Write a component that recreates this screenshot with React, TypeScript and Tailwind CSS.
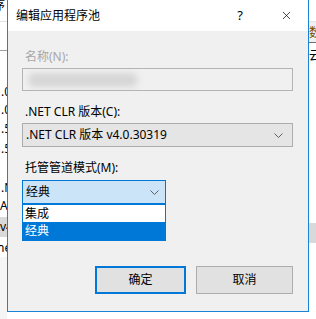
import { X } from "lucide-react";

const font = { fontFamily: '"Noto Sans", "Noto Sans CJK SC", sans-serif' };

function Chevron() {
  return (
    <svg width="9" height="5" viewBox="0 0 9 5" className="shrink-0">
      <path d="M0.5 0.5 L4.5 4.5 L8.5 0.5" fill="none" stroke="#606060" strokeWidth="1" />
    </svg>
  );
}

function BackLeft() {
  return (
    <div className="w-[7px] h-full overflow-hidden flex flex-col text-[12px] leading-[16px] text-black">
      <div className="h-[21px] bg-white relative">
        <span className="absolute left-[-7px] top-[-2px]">序</span>
      </div>
      <div className="h-px bg-[#e3e3e3]" />
      <div className="h-[28px] bg-white" />
      <div className="h-px bg-[#a0a0a0]" />
      <div className="flex flex-col bg-white pt-[33px] whitespace-nowrap">
        <div className="h-[18px] pl-[1px]">.0</div>
        <div className="h-[19px] pl-[1px]">.0</div>
        <div className="h-[20px] pl-[1px]">.5</div>
        <div className="h-[39px] pl-[1px]">.5</div>
        <div className="h-[18px] pl-[1px]">.N</div>
        <div className="h-[19px]">Ap</div>
        <div className="h-[20px] bg-[#d9d9d9] leading-[20px]">v4</div>
        <div className="h-[20px] ml-[-3px] leading-[22px]">ne</div>
      </div>
      <div className="flex-1 bg-[#f5f5f5]" />
    </div>
  );
}

function BackRight() {
  return (
    <div className="w-[7px] h-full overflow-hidden flex flex-col text-[12px] leading-[16px] text-black">
      <div className="h-[21px] bg-white" />
      <div className="h-px bg-[#e3e3e3]" />
      <div className="h-[20px] bg-[#f0f0f0] whitespace-nowrap pt-[3px] text-[#7a4a00]">数</div>
      <div className="h-px bg-[#707070]" />
      <div className="h-[180px] bg-white whitespace-nowrap pt-[5px]">云</div>
      <div className="h-[20px] bg-[#d9d9d9]" />
      <div className="flex-1 bg-white" />
    </div>
  );
}

export default function App() {
  return (
    <div className="relative w-[316px] h-[319px] overflow-hidden bg-white" style={font}>
      <div className="flex justify-between h-full">
        <BackLeft />
        <div className="flex-1 bg-white" />
        <BackRight />
      </div>

      {/* dialog */}
      <div className="absolute left-[7px] top-0 w-[302px] h-[312px] border-x border-b border-[#1883d7] flex flex-col">
        <div className="h-[31px] bg-white flex items-center pl-[8px] text-[12px] text-black">
          <span className="flex-1">编辑应用程序池</span>
          <span className="w-[12px] text-[13px] mr-[34px] text-center">?</span>
          <X className="w-[13px] h-[13px] mr-[15px]" strokeWidth={1.3} color="#000" />
        </div>

        <div className="flex-1 bg-[#f0f0f0] pl-[14px] pr-[15px] pt-[18px] text-[12px] leading-[16px] text-black">
          <div className="pl-[3px] text-[#a7a7a7]">名称(N):</div>
          <div className="mt-[3px] h-[23px] border border-[#b4b4b4] bg-[#f0f0f0] relative overflow-hidden">
            <div className="absolute left-[5px] top-[4px] w-[110px] h-[14px] rounded-full bg-[#d6d6d6] blur-[3px]" />
          </div>

          <div className="mt-[13px] pl-[3px]">.NET CLR 版本(C):</div>
          <div className="mt-[3px] h-[24px] border border-[#adadad] bg-[#e5e5e5] flex items-center pl-[3px] pr-[9px]">
            <span className="flex-1">.NET CLR 版本 v4.0.30319</span>
            <Chevron />
          </div>

          <div className="mt-[13px] pl-[3px]">托管管道模式(M):</div>
          <div className="relative mt-[4px] w-[144px]">
            <div className="h-[24px] border border-[#0078d7] bg-[#cce4f7] flex items-center pl-[3px] pr-[6px]">
              <span className="flex-1">经典</span>
              <Chevron />
            </div>
            <div className="absolute left-0 top-[24px] w-full border border-[#0078d7] bg-white">
              <div className="h-[17px] pl-[2px] leading-[17px]">集成</div>
              <div className="h-[18px] pl-[2px] leading-[18px] bg-[#0078d7] text-white">经典</div>
            </div>
          </div>

          <div className="mt-[62px] flex justify-end gap-[10px]">
            <button className="w-[91px] h-[28px] border-2 border-[#0078d7] bg-[#e1e1e1] text-[12px]">确定</button>
            <button className="w-[97px] h-[28px] border border-[#adadad] bg-[#e1e1e1] text-[12px]">取消</button>
          </div>
        </div>
      </div>
    </div>
  );
}
